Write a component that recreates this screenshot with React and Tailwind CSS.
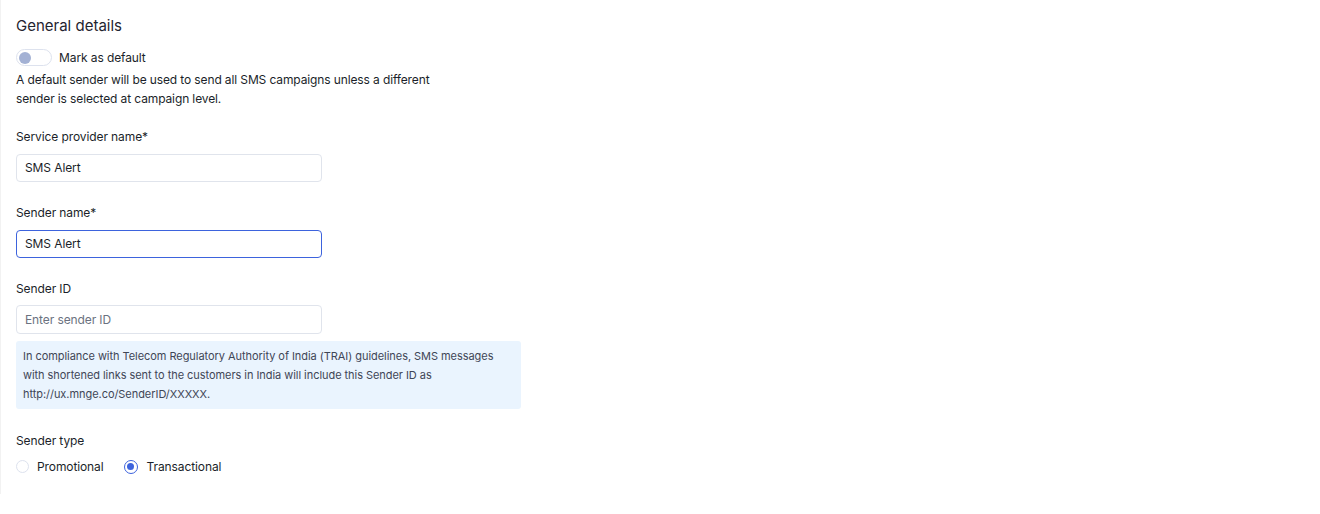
export default function App() {
  return (
    <div className="w-[1320px] h-[514px] bg-white" style={{ fontFamily: 'Inter, "Noto Sans", sans-serif' }}>
      <div className="h-[494px] border-l border-[#f2f2f2] pl-[15px] pt-[16px] text-[#1b1f2a]">
        <h2 className="text-[15px] leading-[20px] text-[#1f2430]">General details</h2>
        <div className="mt-[13px] flex items-center gap-[7px]">
          <div className="w-[36px] h-[17px] rounded-full border border-[#dde2ee] bg-white flex items-center px-[2px]">
            <div className="w-[12px] h-[12px] rounded-full bg-[#a3b1d4]" />
          </div>
          <span className="text-[12px] leading-[17px] tracking-[-0.1px]">Mark as default</span>
        </div>
        <p className="mt-[4px] text-[12px] leading-[19px] w-[430px] tracking-[-0.12px]">
          A default sender will be used to send all SMS campaigns unless a different sender is selected at campaign level.
        </p>
        <div className="mt-[20px]">
          <label className="block text-[12px] leading-[17px] tracking-[-0.1px]">Service provider name*</label>
          <div className="mt-[9px] w-[306px] h-[28px] rounded-[4px] border border-[#e0e4ec] flex items-center px-[8px] text-[12px] tracking-[-0.1px]">SMS Alert</div>
        </div>
        <div className="mt-[22px]">
          <label className="block text-[12px] leading-[17px] tracking-[-0.1px]">Sender name*</label>
          <div className="mt-[9px] w-[306px] h-[28px] rounded-[4px] border border-[#3d63dd] flex items-center px-[8px] text-[12px] tracking-[-0.1px]">SMS Alert</div>
        </div>
        <div className="mt-[22px]">
          <label className="block text-[12px] leading-[17px] tracking-[-0.1px]">Sender ID</label>
          <div className="mt-[8px] w-[306px] h-[29px] rounded-[4px] border border-[#e0e4ec] flex items-center px-[8px] text-[12px] text-[#6b7280] tracking-[-0.1px]">Enter sender ID</div>
          <div className="mt-[7px] w-[505px] rounded-[3px] bg-[#eaf4fe] px-[7px] pt-[6px] pb-[5px] text-[11px] leading-[19px] text-[#3f4656] tracking-[-0.05px]">
            In compliance with Telecom Regulatory Authority of India (TRAI) guidelines, SMS messages with shortened links sent to the customers in India will include this Sender ID as http://ux.mnge.co/SenderID/XXXXX.
          </div>
        </div>
        <div className="mt-[23px]">
          <label className="block text-[12px] leading-[17px] tracking-[-0.1px]">Sender type</label>
          <div className="mt-[9px] flex items-center">
            <div className="flex items-center gap-[8px]">
              <div className="w-[13px] h-[13px] rounded-full border border-[#dde2ee]" />
              <span className="text-[12px] leading-[17px] tracking-[-0.1px]">Promotional</span>
            </div>
            <div className="ml-[20px] flex items-center gap-[9px]">
              <div className="w-[14px] h-[14px] rounded-full border-[1.5px] border-[#3d63dd] flex items-center justify-center">
                <div className="w-[7px] h-[7px] rounded-full bg-[#3d63dd]" />
              </div>
              <span className="text-[12px] leading-[17px] tracking-[-0.1px]">Transactional</span>
            </div>
          </div>
        </div>
      </div>
    </div>
  );
}
